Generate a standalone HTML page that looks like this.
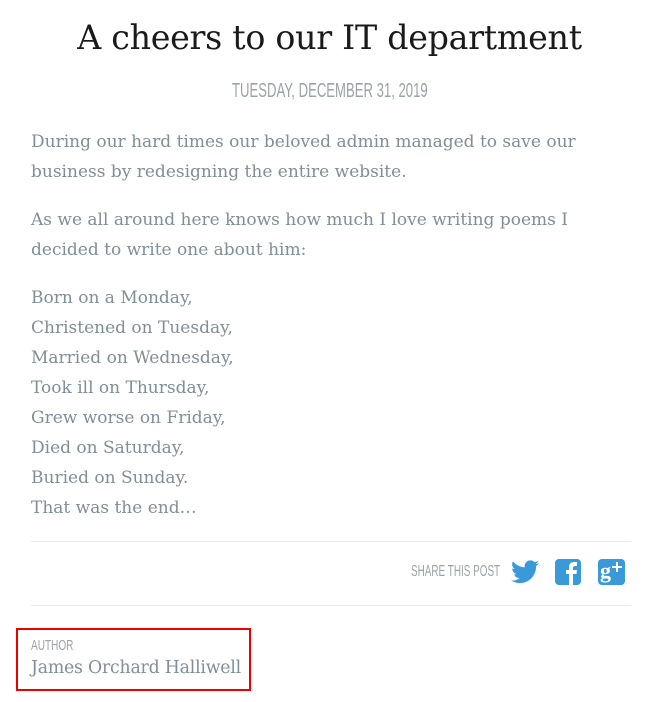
<!DOCTYPE html>
<html><head><style>
body{margin:0;width:659px;height:702px;background:#fff;position:relative;overflow:hidden;font-family:"DejaVu Serif","Liberation Serif",serif;}
.a{position:absolute;white-space:nowrap}
h1{position:absolute;top:18px;left:0;width:659px;text-align:center;margin:0;font-weight:normal;font-size:33.3px;color:#1a1a1a;letter-spacing:-0.3px}
.date{top:80px;left:232px;font-family:"Liberation Sans",sans-serif;font-size:20px;color:#9aa3a8;transform:scaleX(0.656);transform-origin:left top}
.p{left:31px;font-size:17px;color:#7f8e98;line-height:30px}
.hr{position:absolute;left:31px;width:600px;height:1px;background:#e8e8e8}
.share{top:563px;left:411px;font-family:"Liberation Sans",sans-serif;font-size:16px;color:#9aa3a8;transform:scaleX(0.62);transform-origin:left top}
.box{position:absolute;left:16px;top:628px;width:231px;height:59px;border:2px solid #e00}
</style></head><body>
<h1>A cheers to our IT department</h1>
<div class="a date">TUESDAY, DECEMBER 31, 2019</div>
<div class="a p" style="top:127px">During our hard times our beloved admin managed to save our<br>business by redesigning the entire website.</div>
<div class="a p" style="top:205px">As we all around here knows how much I love writing poems I<br>decided to write one about him:</div>
<div class="a p" style="top:283px">Born on a Monday,<br>Christened on Tuesday,<br>Married on Wednesday,<br>Took ill on Thursday,<br>Grew worse on Friday,<br>Died on Saturday,<br>Buried on Sunday.<br>That was the end…</div>
<div class="hr" style="top:541px"></div>
<div class="a share">SHARE THIS POST</div>
<svg class="a" style="left:511px;top:560px" width="28" height="24" viewBox="0 0 24 20"><path fill="#3a9ad9" d="M24 2.4a10 10 0 0 1-2.8.8A5 5 0 0 0 23.3.4a10 10 0 0 1-3.1 1.2A4.9 4.9 0 0 0 11.8 6 14 14 0 0 1 1.7.9a4.9 4.9 0 0 0 1.5 6.6A4.9 4.9 0 0 1 1 6.9a4.9 4.9 0 0 0 3.9 4.8 4.9 4.9 0 0 1-2.2.1 4.9 4.9 0 0 0 4.6 3.4A9.9 9.9 0 0 1 0 17.3 14 14 0 0 0 7.5 19.5c9 0 14-7.5 14-14v-.6A10 10 0 0 0 24 2.4z"/></svg>
<svg class="a" style="left:555px;top:559px" width="26" height="26" viewBox="0 0 26 26"><rect width="26" height="26" rx="4" fill="#3a9ad9"/><path fill="#fff" d="M14 26V15h-3v-4h3V8c0-3 2-5 5-5h3v4h-2c-1 0-2 .5-2 2v2h4l-.5 4H18v11z"/></svg>
<svg class="a" style="left:598px;top:559px" width="27" height="26" viewBox="0 0 27 26"><rect width="27" height="26" rx="4" fill="#3a9ad9"/><text x="2" y="19" font-family="Liberation Serif,serif" font-weight="bold" font-size="22" fill="#fff">g</text><path fill="#fff" d="M18 3h2v4h4v2h-4v4h-2V9h-4V7h4z"/></svg>
<div class="hr" style="top:605px"></div>
<div class="box"></div>
<div class="a" style="left:31px;top:637px;font-family:'Liberation Sans',sans-serif;font-size:15px;color:#9aa3a8;transform:scaleX(0.67);transform-origin:left top">AUTHOR</div>
<div class="a" style="left:31px;top:658px;font-size:17.3px;color:#7f8e98;letter-spacing:-0.2px">James Orchard Halliwell</div>
</body></html>
